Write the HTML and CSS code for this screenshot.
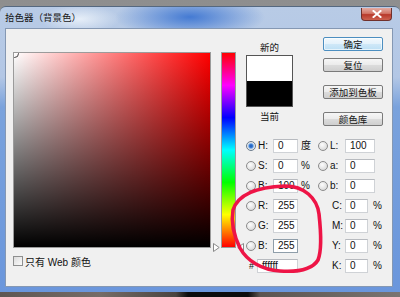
FILE: index.html
```html
<!DOCTYPE html>
<html lang="zh-CN">
<head>
<meta charset="utf-8">
<title>拾色器（背景色）</title>
<link rel="stylesheet" href="styles.css">
</head>
<body>
<div class="desktop">
  <div class="window">
    <div class="titlebar">
      <span class="title">拾色器（背景色）</span>
      <span class="close">
        <svg width="10" height="8" viewBox="0 0 10 8"><path d="M1.5 1 L8.5 7 M8.5 1 L1.5 7" stroke="#fff" stroke-width="2" stroke-linecap="square"/></svg>
      </span>
    </div>
    <div class="client">
      <div class="col-field">
        <div class="field"><span class="marker"></span></div>
        <div class="webonly"><span class="checkbox"></span><span>只有 Web 颜色</span></div>
      </div>
      <div class="hue">
        <svg class="arrow arrow-left" width="7" height="9" viewBox="0 0 7 9"><path d="M0.5 0.5 L6.2 4.5 L0.5 8.5 Z" fill="#fff" stroke="#8a8a8a"/></svg>
        <svg class="arrow arrow-right" width="7" height="9" viewBox="0 0 7 9"><path d="M6.5 0.5 L0.8 4.5 L6.5 8.5 Z" fill="#fff" stroke="#8a8a8a"/></svg>
      </div>
      <div class="col-right">
        <div class="top">
          <div class="swatch-block">
            <div class="sw-label">新的</div>
            <div class="swatch"><div class="sw-new"></div><div class="sw-cur"></div></div>
            <div class="sw-label sw-label-bottom">当前</div>
          </div>
          <div class="buttons">
            <div class="btn btn-default">确定</div>
            <div class="btn btn-2">复位</div>
            <div class="btn btn-3">添加到色板</div>
            <div class="btn btn-4">颜色库</div>
          </div>
        </div>
        <div class="fields">
          <div class="row">
            <div class="half-l"><span class="radio on"></span><span class="lbl">H:</span><span class="inp">0</span><span class="unit">度</span></div>
            <div class="half-r"><span class="radio"></span><span class="lbl">L:</span><span class="inp inp-w">100</span></div>
          </div>
          <div class="row">
            <div class="half-l"><span class="radio"></span><span class="lbl">S:</span><span class="inp">0</span><span class="unit">%</span></div>
            <div class="half-r"><span class="radio"></span><span class="lbl">a:</span><span class="inp inp-w">0</span></div>
          </div>
          <div class="row">
            <div class="half-l"><span class="radio"></span><span class="lbl">B:</span><span class="inp">100</span><span class="unit">%</span></div>
            <div class="half-r"><span class="radio"></span><span class="lbl">b:</span><span class="inp inp-w">0</span></div>
          </div>
          <div class="row row-r">
            <div class="half-l"><span class="radio"></span><span class="lbl">R:</span><span class="inp">255</span></div>
            <div class="half-r"><span class="spacer"></span><span class="lbl lbl-c">C:</span><span class="inp inp-n">0</span><span class="unit unit-r">%</span></div>
          </div>
          <div class="row">
            <div class="half-l"><span class="radio"></span><span class="lbl">G:</span><span class="inp">255</span></div>
            <div class="half-r"><span class="spacer"></span><span class="lbl lbl-c">M:</span><span class="inp inp-n">0</span><span class="unit unit-r">%</span></div>
          </div>
          <div class="row row-b">
            <div class="half-l"><span class="radio"></span><span class="lbl">B:</span><span class="inp inp-focus">255</span></div>
            <div class="half-r"><span class="spacer"></span><span class="lbl lbl-c">Y:</span><span class="inp inp-n">0</span><span class="unit unit-r">%</span></div>
          </div>
          <div class="row">
            <div class="half-l"><span class="hash">#</span><span class="inp inp-hex">ffffff</span></div>
            <div class="half-r"><span class="spacer"></span><span class="lbl lbl-c">K:</span><span class="inp inp-n">0</span><span class="unit unit-r">%</span></div>
          </div>
        </div>
      </div>
    </div>
  </div>
  <div class="ground"></div>
  <svg class="annotation" width="400" height="297" viewBox="0 0 400 297">
    <path d="M233 210 C238 194 258 187 285 186 C304 186 317 198 319 214 C321 232 322 250 318 260 C312 270 295 272 280 271 C262 270 247 261 240 248 C234 236 231 222 233 210 Z" fill="none" stroke="#ee1446" stroke-width="3.6" stroke-linecap="round" stroke-linejoin="round"/>
  </svg>
</div>
</body>
</html>
```
FILE: styles.css
```css
* { box-sizing: border-box; }
html, body { margin: 0; padding: 0; }
body {
  font-family: "Liberation Sans", "Noto Sans CJK SC", sans-serif;
  font-size: 10px;
  color: #111;
}
.desktop {
  position: relative;
  width: 400px;
  height: 297px;
  overflow: hidden;
  padding-top: 6px;
  background: linear-gradient(#8e8e8e, #a9a9a9);
}
.window {
  height: 286px;
  padding: 0 7px 5px 5px;
  border-top: 1px solid #55687f;
  border-radius: 6px 6px 0 0;
  display: flex;
  flex-direction: column;
  background:
    radial-gradient(ellipse 75px 22px at 190px 10px, rgba(62,118,210,0.95), rgba(62,118,210,0) 100%),
    radial-gradient(ellipse 40px 14px at 80px 12px, rgba(235,242,250,0.9), rgba(235,242,250,0) 100%),
    linear-gradient(#b8cbe6 0, #b3c7e5 70px, #7aa2dc 100px, #6a96dc 100%);
}
.titlebar {
  height: 21px;
  display: flex;
  justify-content: space-between;
  align-items: flex-start;
  flex: none;
}
.title {
  margin-top: 4px;
  font-family: "Noto Sans CJK SC", sans-serif;
  font-size: 9.5px;
  line-height: 12px;
  color: #151515;
}
.close {
  margin-top: 1px;
  margin-right: 1px;
  width: 31px;
  height: 13px;
  border: 1px solid #70302b;
  border-top: none;
  border-radius: 0 0 4px 4px;
  background: linear-gradient(#e4aca3 0, #d27667 45%, #b8392b 55%, #cc6250 100%);
  display: flex;
  align-items: center;
  justify-content: center;
}
.close svg { display: block; }
.client {
  flex: 1;
  background: #f0f0f0;
  border: 1px solid #8598b3;
  display: flex;
  align-items: flex-start;
  padding-left: 7px;
}
.col-field { margin-top: 23px; }
.field {
  position: relative;
  overflow: hidden;
  width: 198px;
  height: 196px;
  border: 1px solid #9b9b9b;
  background:
    linear-gradient(to top, #000, rgba(0,0,0,0)),
    linear-gradient(to right, #fff, #f00);
}
.marker {
  position: absolute;
  left: -4px;
  top: -4px;
  width: 9px;
  height: 9px;
  border: 1px solid #444;
  border-radius: 50%;
}
.webonly {
  margin-top: 8px;
  display: flex;
  align-items: center;
  height: 10px;
  font-family: "Liberation Sans", "Noto Sans CJK SC", sans-serif;
  font-size: 10px;
}
.checkbox {
  width: 10px;
  height: 10px;
  margin-right: 2px;
  border: 1px solid #8e8f8f;
  background: linear-gradient(135deg, #dcdcdc, #fbfbfb);
}
.hue {
  position: relative;
  margin-left: 10px;
  margin-top: 23px;
  width: 15px;
  height: 196px;
  border: 1px solid #9b9b9b;
  background: linear-gradient(#f00 0%, #f0f 16.67%, #00f 33.33%, #0ff 50%, #0f0 66.67%, #ff0 83.33%, #f00 100%);
}
.arrow { position: absolute; bottom: -5px; display: block; }
.arrow-left { left: -9px; }
.arrow-right { right: -9px; }
.col-right {
  margin-left: 10px;
  margin-top: 8px;
  width: 140px;
}
.top { display: flex; align-items: flex-start; }
.swatch-block {
  width: 47px;
  margin-top: 4px;
  display: flex;
  flex-direction: column;
  align-items: center;
}
.sw-label {
  font-family: "Noto Sans CJK SC", sans-serif;
  font-size: 9.5px;
  line-height: 12px;
}
.sw-label-bottom { margin-top: 3px; }
.swatch {
  margin-top: 2px;
  width: 47px;
  height: 52px;
  border: 1px solid #555;
  display: flex;
  flex-direction: column;
}
.sw-new { flex: 1; background: #fff; }
.sw-cur { flex: 1; background: #000; }
.buttons {
  margin-left: 30px;
  width: 60px;
  display: flex;
  flex-direction: column;
}
.btn {
  height: 14px;
  border: 1px solid #7a7a7a;
  border-radius: 2px;
  background: linear-gradient(#f6f6f6 0, #ebebeb 50%, #dcdcdc 51%, #cfcfcf 100%);
  font-family: "Noto Sans CJK SC", sans-serif;
  font-size: 9.5px;
  line-height: 12px;
  text-align: center;
  color: #151515;
}
.btn-default {
  border-color: #4c8ec0;
  background: linear-gradient(#f2f9fd 0, #e3f1fb 50%, #cfe8f8 51%, #bcdff5 100%);
  box-shadow: inset 0 0 0 1px rgba(255,255,255,0.6);
}
.btn-2 { margin-top: 7px; }
.btn-3 { margin-top: 13px; }
.btn-4 { margin-top: 13px; }
.fields { margin-top: 13px; }
.row {
  display: flex;
  height: 14px;
  margin-bottom: 6px;
}
.row-r { margin-top: 2px; }
.row-b { margin-top: 1px; }
.half-l, .half-r {
  display: flex;
  align-items: center;
  height: 14px;
}
.half-l { width: 72px; }
.radio {
  width: 10px;
  height: 10px;
  border-radius: 50%;
  border: 1px solid #8c8c8c;
  background: radial-gradient(circle at 40% 35%, #fdfdfd 0, #e2e2e2 60%, #cfcfcf 100%);
}
.radio.on {
  border-color: #6b7b8c;
  background: radial-gradient(circle at 50% 50%, #1b56b8 0, #3c80d6 1.8px, #a9c9ee 2.8px, #e8e8e8 3.6px, #d3d3d3 100%);
}
.lbl {
  margin-left: 2px;
  width: 15px;
  line-height: 12px;
}
.lbl-c { padding-left: 2px; }
.spacer { width: 10px; }
.inp {
  width: 25px;
  height: 14px;
  border: 1px solid #cfd2d6;
  border-top-color: #b7babf;
  background: #fff;
  padding-left: 4px;
  line-height: 12px;
}
.inp-w { width: 30px; }
.inp-n { width: 23px; }
.inp-focus { border-color: #8f9eaa; }
.inp-hex { width: 41px; }
.hash {
  width: 11px;
  text-align: center;
  font-size: 9px;
  line-height: 12px;
}
.unit {
  margin-left: 3px;
  line-height: 12px;
  font-size: 10px;
}
.unit-r { margin-left: 5px; }
.ground {
  height: 5px;
  background: linear-gradient(to right, #5e5652 0, #766c67 25%, #4a4440 44%, #0c0c0c 47%, #0c0c0c 62%, #5b5450 65%, #7a7471 100%);
}
.annotation {
  position: absolute;
  left: 0;
  top: 0;
  pointer-events: none;
}
```
